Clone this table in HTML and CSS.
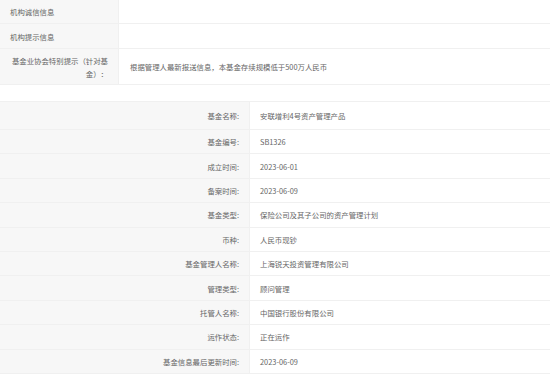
FILE: index.html
```html
<!DOCTYPE html>
<html lang="zh-CN">
<head>
  <meta charset="UTF-8">
  <title>基金信息</title>
  <link rel="stylesheet" href="styles.css">
</head>
<body>

<div class="notice">
  <div class="row row-a">
    <div class="label">机构诚信信息</div>
    <div class="value"></div>
  </div>
  <div class="row row-b">
    <div class="label">机构提示信息</div>
    <div class="value"></div>
  </div>
  <div class="row row-c">
    <div class="label label-right">基金业协会特别提示（针对基金）：</div>
    <div class="value">根据管理人最新报送信息，本基金存续规模低于500万人民币</div>
  </div>
</div>

<div class="info">
  <div class="row first">
    <div class="label">基金名称:</div>
    <div class="value">安联增利4号资产管理产品</div>
  </div>
  <div class="row">
    <div class="label">基金编号:</div>
    <div class="value">SB1326</div>
  </div>
  <div class="row">
    <div class="label">成立时间:</div>
    <div class="value">2023-06-01</div>
  </div>
  <div class="row">
    <div class="label">备案时间:</div>
    <div class="value">2023-06-09</div>
  </div>
  <div class="row">
    <div class="label">基金类型:</div>
    <div class="value">保险公司及其子公司的资产管理计划</div>
  </div>
  <div class="row">
    <div class="label">币种:</div>
    <div class="value">人民币现钞</div>
  </div>
  <div class="row">
    <div class="label">基金管理人名称:</div>
    <div class="value">上海锐天投资管理有限公司</div>
  </div>
  <div class="row">
    <div class="label">管理类型:</div>
    <div class="value">顾问管理</div>
  </div>
  <div class="row">
    <div class="label">托管人名称:</div>
    <div class="value">中国银行股份有限公司</div>
  </div>
  <div class="row">
    <div class="label">运作状态:</div>
    <div class="value">正在运作</div>
  </div>
  <div class="row">
    <div class="label">基金信息最后更新时间:</div>
    <div class="value">2023-06-09</div>
  </div>
</div>

</body>
</html>
```

FILE: styles.css
```css
* {
  box-sizing: border-box;
  margin: 0;
  padding: 0;
}

body {
  font-family: "Noto Sans CJK SC", "Open Sans", sans-serif;
  font-size: 7.4px;
  color: #666;
  background-color: #fff;
  width: 550px;
  overflow: hidden;
  text-spacing-trim: space-all;
}

.row {
  display: flex;
  border-bottom: 1px solid #f0f0f0;
}

.label {
  display: flex;
  align-items: center;
  background-color: #f7f7f7;
  border-right: 1px solid #f0f0f0;
  flex-shrink: 0;
}

.value {
  display: flex;
  align-items: center;
  flex: 1;
}

/* top block */
.notice .label {
  width: 119px;
  padding: 0 10px;
}

.notice .value {
  padding-left: 11px;
}

.row-a { height: 24px; }
.row-b { height: 25px; }
.row-c { height: 36px; }

.label-right {
  text-align: right;
  line-height: 13px;
  padding-top: 3px;
}

/* fund info */
.info {
  margin-top: 16px;
  border-top: 1px solid #f0f0f0;
}

.info .row {
  height: 24.4px;
}

.info .row.first {
  height: 28px;
}

.info .label {
  width: 250px;
  justify-content: flex-end;
  padding-right: 10px;
}

.info .value {
  padding-left: 10px;
}
```
